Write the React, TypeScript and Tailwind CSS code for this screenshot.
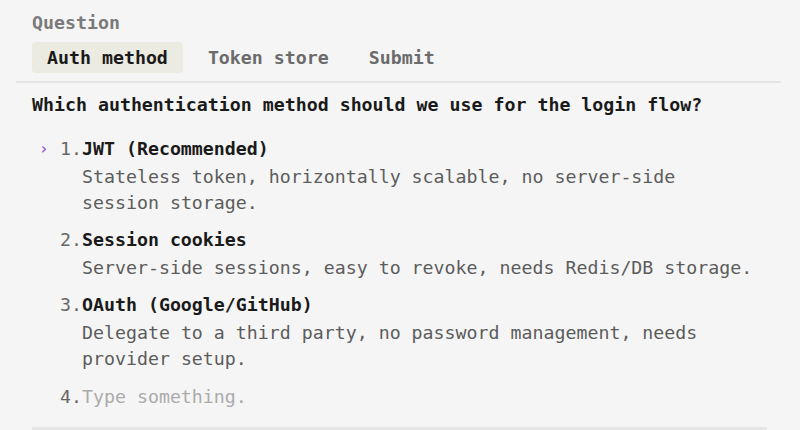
import React from "react";

const options = [
  {
    n: "1.",
    title: "JWT (Recommended)",
    desc: ["Stateless token, horizontally scalable, no server-side", "session storage."],
    active: true,
  },
  {
    n: "2.",
    title: "Session cookies",
    desc: ["Server-side sessions, easy to revoke, needs Redis/DB storage."],
  },
  {
    n: "3.",
    title: "OAuth (Google/GitHub)",
    desc: ["Delegate to a third party, no password management, needs", "provider setup."],
  },
];

export default function App() {
  return (
    <div
      className="w-[800px] h-[430px] overflow-hidden bg-[#f5f5f5] text-[18.25px] leading-[26px] text-[#1a1a1a]"
      style={{ fontFamily: '"DejaVu Sans Mono", "Liberation Mono", monospace' }}
    >
      <div className="pt-[10px] px-[32px] font-bold text-[#7a7a7a]">Question</div>
      <div className="mt-[6px] px-[32px] flex gap-[10px]">
        {["Auth method", "Token store", "Submit"].map((t, i) => (
          <div
            key={t}
            className={
              i === 0
                ? "px-[15px] h-[31px] leading-[31px] rounded-[4px] bg-[#ebebe1] font-bold text-[#1a1a1a]"
                : "px-[15px] h-[31px] leading-[31px] font-bold text-[#6b6b6b]"
            }
          >
            {t}
          </div>
        ))}
      </div>
      <div className="mt-[8px] ml-[16px] mr-[19px] h-[2px] bg-[#e4e4e4]" />
      <div className="mt-[9px] px-[32px] font-bold">
        Which authentication method should we use for the login flow?
      </div>
      <div className="mt-[18px] px-[32px] flex flex-col gap-[11px]">
        {options.map((o) => (
          <div key={o.n}>
            <div className="flex">
              <div className="w-[28px] pl-[7px] font-bold text-[#9a62d8] text-[16px]">{o.active ? "›" : ""}</div>
              <div className="text-[#666666]">{o.n}</div>
              <div className="font-bold">{o.title}</div>
            </div>
            <div className="mt-[2px] pl-[50px] text-[#5c5c5c]">
              {o.desc.map((d) => (
                <div key={d}>{d}</div>
              ))}
            </div>
          </div>
        ))}
        <div className="flex mt-[1px]">
          <div className="w-[28px]" />
          <div className="text-[#666666]">4.</div>
          <div className="text-[#ababab]">Type something.</div>
        </div>
      </div>
      <div className="mt-[17px] ml-[32px] mr-[33px] h-[3px] bg-[#e6e6e6]" />
    </div>
  );
}
